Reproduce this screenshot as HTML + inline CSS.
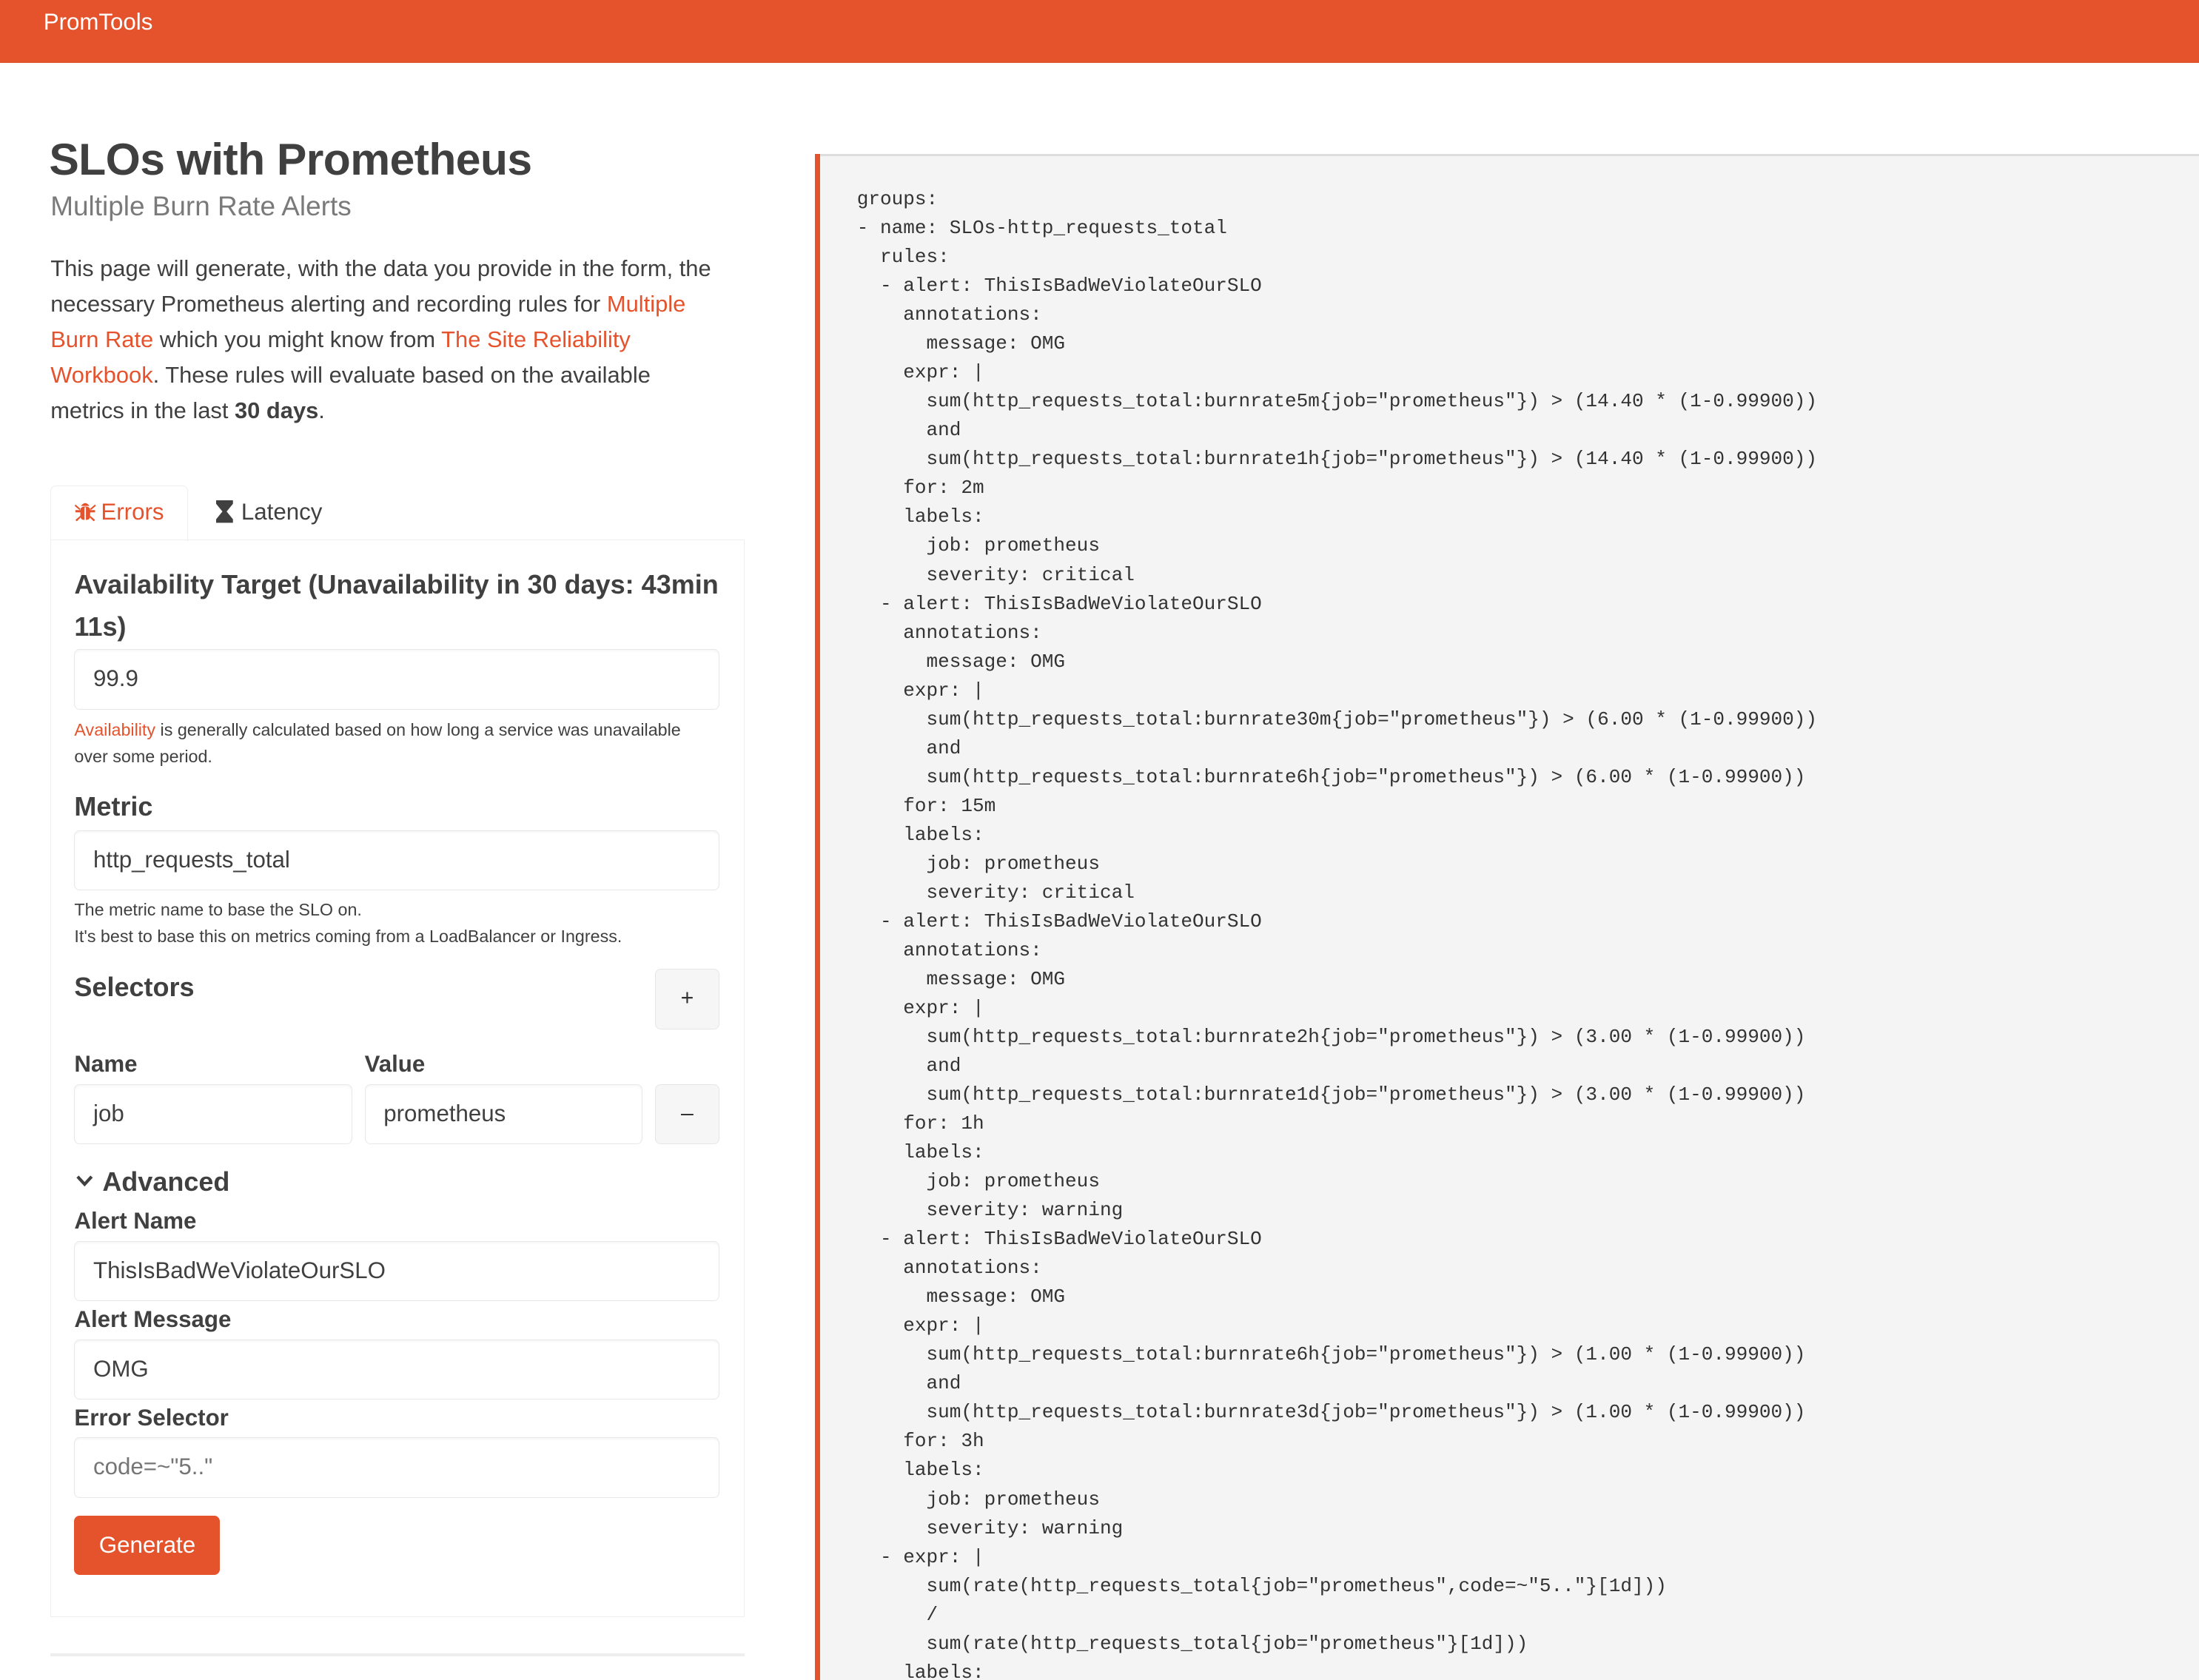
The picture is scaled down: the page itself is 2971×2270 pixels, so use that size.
<!DOCTYPE html>
<html><head><meta charset="utf-8"><style>
html,body{margin:0;padding:0;background:#fff;overflow:hidden}
#w{position:relative;width:1568px;height:1198px;zoom:1.89477;font-family:"Liberation Sans",sans-serif;color:#404040;overflow:hidden}
.a{position:absolute;white-space:nowrap}
.nav{left:0;top:0;width:1568px;height:45px;background:#e5532d}
.lnk{color:#e5532d}
.inp{position:absolute;background:#fff;border:1px solid #e8e8e8;border-radius:4px;box-shadow:inset 0 1px 2px rgba(0,0,0,.04);box-sizing:border-box;font-size:16.5px;color:#404040;line-height:41px;padding-left:13px}
.btn{position:absolute;background:#f6f6f6;border:1px solid #e6e6e6;border-radius:4px;box-sizing:border-box;text-align:center;font-size:16px;color:#333}
.lab{font-weight:bold;font-size:16.5px;color:#404040}
.help{font-size:12.3px;color:#404040}
pre{position:absolute;left:611px;top:132px;margin:0;font-family:"Liberation Mono",monospace;font-size:13.75px;line-height:20.6px;color:#333}
</style></head><body><div id="w">
<div class="a nav"></div>
<div class="a" style="left:31px;top:6px;font-size:16.5px;color:#fff;line-height:20px">PromTools</div>

<div class="a" style="left:35px;top:94px;font-size:32px;font-weight:bold;color:#404040;line-height:40px;letter-spacing:-0.3px">SLOs with Prometheus</div>
<div class="a" style="left:36px;top:135px;font-size:19.5px;color:#7a7a7a;line-height:24px">Multiple Burn Rate Alerts</div>

<div class="a" style="left:36px;top:179px;font-size:16.3px;line-height:25.3px;color:#404040">This page will generate, with the data you provide in the form, the<br>necessary Prometheus alerting and recording rules for <span class="lnk">Multiple</span><br><span class="lnk">Burn Rate</span> which you might know from <span class="lnk">The Site Reliability</span><br><span class="lnk">Workbook</span>. These rules will evaluate based on the available<br>metrics in the last <b>30 days</b>.</div>

<!-- tabs -->
<div class="a" style="left:36px;top:346px;width:98px;height:40px;border:1px solid #eee;border-bottom:none;border-radius:4px 4px 0 0;background:#fff;box-sizing:border-box"></div>
<svg class="a" style="left:53px;top:357px" width="16" height="16" viewBox="0 0 16 16"><g fill="#e5532d"><path d="M5 4 Q8 0 11 4Z"/><rect x="4.5" y="4.5" width="7" height="9.5" rx="2.5"/><rect x="1" y="7" width="14" height="1.6"/><path d="M1 3 L4.5 6 L4 7 L0.5 4Z M15 3 L11.5 6 L12 7 L15.5 4Z M1 14 L4.5 11 L4.5 12.5 L2 15Z M15 14 L11.5 11 L11.5 12.5 L14 15Z"/></g><rect x="7.5" y="5" width="1" height="9" fill="#fff"/></svg>
<div class="a" style="left:72px;top:355px;font-size:16.5px;color:#e5532d;line-height:20px">Errors</div>
<svg class="a" style="left:154px;top:357px" width="12" height="16" viewBox="0 0 12 16"><path d="M0 0H12V2.5L7.5 8L12 13.5V16H0V13.5L4.5 8L0 2.5Z" fill="#404040"/></svg>
<div class="a" style="left:172px;top:355px;font-size:16.5px;color:#404040;line-height:20px">Latency</div>

<div class="a" style="left:36px;top:385px;width:495px;height:768px;border:1px solid #eee;box-sizing:border-box"></div>
<div class="a" style="left:36px;top:1179px;width:495px;height:2px;background:#eee"></div>

<div class="a lab" style="left:53px;top:402px;font-size:19px;line-height:30px;white-space:normal;width:470px">Availability Target (Unavailability in 30 days: 43min 11s)</div>
<div class="inp" style="left:53px;top:463px;width:460px;height:43px">99.9</div>
<div class="a help" style="left:53px;top:511px;line-height:19px"><span class="lnk">Availability</span> is generally calculated based on how long a service was unavailable<br>over some period.</div>

<div class="a lab" style="left:53px;top:564px;font-size:19px;line-height:22px">Metric</div>
<div class="inp" style="left:53px;top:592px;width:460px;height:43px">http_requests_total</div>
<div class="a help" style="left:53px;top:639px;line-height:19px">The metric name to base the SLO on.<br>It's best to base this on metrics coming from a LoadBalancer or Ingress.</div>

<div class="a lab" style="left:53px;top:693px;font-size:19px;line-height:22px">Selectors</div>
<div class="btn" style="left:467px;top:691px;width:46px;height:43px;line-height:41px">+</div>
<div class="a lab" style="left:53px;top:749px;line-height:20px">Name</div>
<div class="a lab" style="left:260px;top:749px;line-height:20px">Value</div>
<div class="inp" style="left:53px;top:773px;width:198px;height:43px">job</div>
<div class="inp" style="left:260px;top:773px;width:198px;height:43px">prometheus</div>
<div class="btn" style="left:467px;top:773px;width:46px;height:43px;line-height:41px">–</div>

<svg class="a" style="left:54px;top:837px" width="13" height="10" viewBox="0 0 13 10"><path d="M1.5 2L6.5 7.5L11.5 2" fill="none" stroke="#404040" stroke-width="2.2"/></svg>
<div class="a lab" style="left:73px;top:832px;font-size:19px;line-height:22px">Advanced</div>
<div class="a lab" style="left:53px;top:861px;line-height:20px">Alert Name</div>
<div class="inp" style="left:53px;top:885px;width:460px;height:43px">ThisIsBadWeViolateOurSLO</div>
<div class="a lab" style="left:53px;top:931px;line-height:20px">Alert Message</div>
<div class="inp" style="left:53px;top:955px;width:460px;height:43px">OMG</div>
<div class="a lab" style="left:53px;top:1001px;line-height:20px">Error Selector</div>
<div class="inp" style="left:53px;top:1025px;width:460px;height:43px;color:#757575">code=~"5.."</div>
<div class="a" style="left:53px;top:1081px;width:104px;height:42px;background:#e5532d;border-radius:4px;color:#fff;font-size:16.5px;line-height:42px;text-align:center">Generate</div>

<!-- right -->
<div class="a" style="left:581px;top:110px;width:987px;height:1100px;background:#f4f4f4;border-top:2px solid #ddd;box-sizing:border-box"></div>
<div class="a" style="left:581px;top:110px;width:4px;height:1100px;background:#e5532d"></div>
<pre>groups:
- name: SLOs-http_requests_total
  rules:
  - alert: ThisIsBadWeViolateOurSLO
    annotations:
      message: OMG
    expr: |
      sum(http_requests_total:burnrate5m{job="prometheus"}) &gt; (14.40 * (1-0.99900))
      and
      sum(http_requests_total:burnrate1h{job="prometheus"}) &gt; (14.40 * (1-0.99900))
    for: 2m
    labels:
      job: prometheus
      severity: critical
  - alert: ThisIsBadWeViolateOurSLO
    annotations:
      message: OMG
    expr: |
      sum(http_requests_total:burnrate30m{job="prometheus"}) &gt; (6.00 * (1-0.99900))
      and
      sum(http_requests_total:burnrate6h{job="prometheus"}) &gt; (6.00 * (1-0.99900))
    for: 15m
    labels:
      job: prometheus
      severity: critical
  - alert: ThisIsBadWeViolateOurSLO
    annotations:
      message: OMG
    expr: |
      sum(http_requests_total:burnrate2h{job="prometheus"}) &gt; (3.00 * (1-0.99900))
      and
      sum(http_requests_total:burnrate1d{job="prometheus"}) &gt; (3.00 * (1-0.99900))
    for: 1h
    labels:
      job: prometheus
      severity: warning
  - alert: ThisIsBadWeViolateOurSLO
    annotations:
      message: OMG
    expr: |
      sum(http_requests_total:burnrate6h{job="prometheus"}) &gt; (1.00 * (1-0.99900))
      and
      sum(http_requests_total:burnrate3d{job="prometheus"}) &gt; (1.00 * (1-0.99900))
    for: 3h
    labels:
      job: prometheus
      severity: warning
  - expr: |
      sum(rate(http_requests_total{job="prometheus",code=~"5.."}[1d]))
      /
      sum(rate(http_requests_total{job="prometheus"}[1d]))
    labels:
      job: prometheus</pre>
</div></body></html>
